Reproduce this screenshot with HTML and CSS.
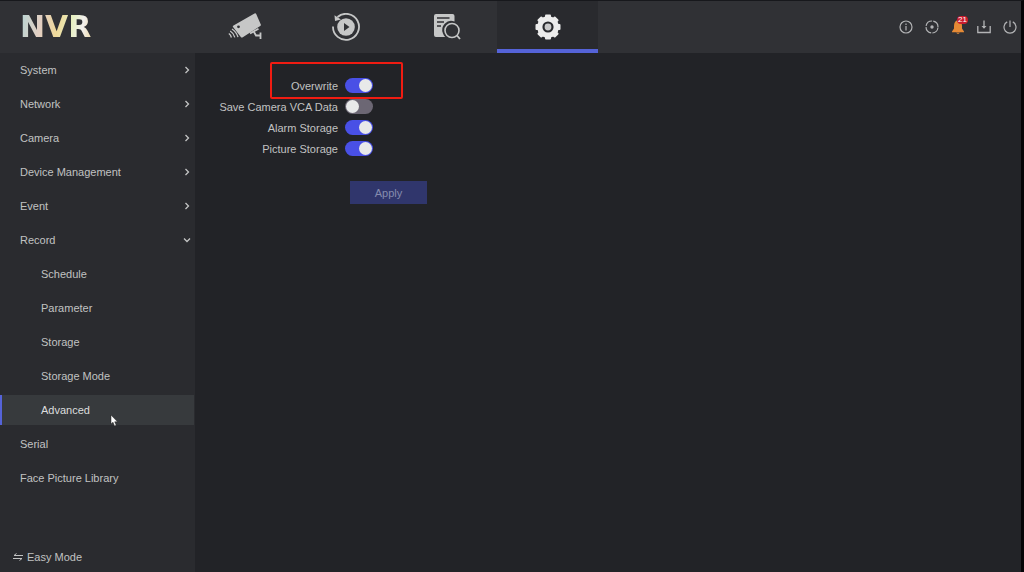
FILE: index.html
```html
<!DOCTYPE html>
<html lang="en">
<head>
    <meta charset="UTF-8">
    <title>NVR - Advanced</title>
    <link rel="stylesheet" href="styles.css">
</head>
<body>
<header class="topbar">
    <div class="logo"><span>NVR</span></div>

    <nav class="tabs" aria-label="Main">
        <a href="#live" class="tab" aria-label="Live View">
            <svg width="34" height="28" viewBox="0 0 34 28">
                <path d="M5.500 12.500 26.500.4q1.200-.6 1.700.5l4.600 10.600q.4 1-.6 1.600L14.400 24.400q-1 .5-1.600-.4L5 14q-.6-.9.5-1.500z" fill="currentColor"/>
                <circle cx="10.500" cy="13.800" r="1.400" fill="#303135"/>
                <path d="M4 16q4.600 3 6 8.200M2.200 18q3.400 2 4.600 6.400M.8 20.500q2 1.200 2.600 4" fill="none" stroke="currentColor" stroke-width="1.300"/>
                <path d="m22 20.500 8.500-4.800M26 19l2 3.500h4M32.500 19.500v6.500" fill="none" stroke="currentColor" stroke-width="1.800"/>
            </svg>
        </a>
        <a href="#playback" class="tab" aria-label="Playback">
            <svg width="28" height="28" viewBox="0 0 28 28">
                <path d="M1 13.500A13 13 0 1 0 5.500 4" fill="none" stroke="currentColor" stroke-width="1.800"/>
                <path d="M2.500 2.200 3 8l6-1.500z" fill="currentColor"/>
                <circle cx="14" cy="14" r="8.800" fill="currentColor"/>
                <path d="m12 10 5.500 4-5.500 4z" fill="#303135"/>
            </svg>
        </a>
        <a href="#search" class="tab" aria-label="File Management">
            <svg width="28" height="28" viewBox="0 0 28 28">
                <path d="M3 1h16.500q2 0 2 2v5.500a9 9 0 0 0-11.500 12q.8 2 2.200 3.500H3q-2 0-2-2V3q0-2 2-2z" fill="currentColor"/>
                <path d="M4 5h12.500M4 9h7M4 13h4" stroke="#303135" stroke-width="1.500"/>
                <circle cx="19" cy="17.500" r="7" fill="none" stroke="currentColor" stroke-width="1.600"/>
                <path d="m24 22.500 3 3.500" stroke="currentColor" stroke-width="1.800"/>
            </svg>
        </a>
        <a href="#settings" class="tab active" aria-label="Configuration" aria-current="page">
            <svg width="28" height="28" viewBox="0 0 28 28">
                <g fill="currentColor">
                    <circle cx="14" cy="14" r="10.800"/>
                    <rect x="11" y="1.500" width="6" height="25" rx="1"/>
                    <rect x="11" y="1.500" width="6" height="25" rx="1" transform="rotate(45 14 14)"/>
                    <rect x="11" y="1.500" width="6" height="25" rx="1" transform="rotate(90 14 14)"/>
                    <rect x="11" y="1.500" width="6" height="25" rx="1" transform="rotate(135 14 14)"/>
                </g>
                <circle cx="14" cy="14" r="4.500" fill="#c9c9ca" stroke="#292a2e" stroke-width="2.200"/>
            </svg>
        </a>
    </nav>

    <div class="tools">
        <button type="button" class="tool" aria-label="Information">
            <svg width="14" height="14" viewBox="0 0 14 14" fill="none" stroke="currentColor" stroke-width="1.200">
                <circle cx="7" cy="7" r="6"/>
                <path d="M7 6v4.500M7 3.500V5"/>
            </svg>
        </button>
        <button type="button" class="tool" aria-label="Status">
            <svg width="14" height="14" viewBox="0 0 14 14" fill="none" stroke="currentColor" stroke-width="1.200">
                <circle cx="7" cy="7" r="6" stroke-dasharray="8.200 1.225" stroke-dashoffset="-.6"/>
                <circle cx="7" cy="7" r="1.700" fill="currentColor" stroke="none"/>
            </svg>
        </button>
        <button type="button" class="tool alarm" aria-label="Alarms">
            <svg width="14" height="14" viewBox="0 0 14 14" fill="currentColor">
                <path d="M7 0Q3 1.200 3 6v2.500L1 11.500v.7h12v-.7l-2-3V6Q11 1.200 7 0zM5 12.700h4L7 14z"/>
            </svg>
            <span class="badge">21</span>
        </button>
        <button type="button" class="tool" aria-label="Download">
            <svg width="14" height="14" viewBox="0 0 14 14" fill="none" stroke="currentColor" stroke-width="1.300">
                <path d="M.8 6v6.500h12.400V6M7 .5V8"/>
                <path d="M4.500 6 7 8.800 9.500 6z" fill="currentColor" stroke="none"/>
            </svg>
        </button>
        <button type="button" class="tool" aria-label="Power">
            <svg width="14" height="14" viewBox="0 0 14 14" fill="none" stroke="currentColor" stroke-width="1.200">
                <path d="M4.200 1.900a6 6 0 1 0 5.600 0M7 .5V7"/>
            </svg>
        </button>
    </div>
</header>

<div class="page">
    <aside class="sidebar">
        <nav class="menu" aria-label="Configuration">
            <a href="#system">System <svg class="arrow" viewBox="0 0 8 8"><path d="m2.500 1 3 3-3 3"/></svg></a>
            <a href="#network">Network <svg class="arrow" viewBox="0 0 8 8"><path d="m2.500 1 3 3-3 3"/></svg></a>
            <a href="#camera">Camera <svg class="arrow" viewBox="0 0 8 8"><path d="m2.500 1 3 3-3 3"/></svg></a>
            <a href="#device">Device Management <svg class="arrow" viewBox="0 0 8 8"><path d="m2.500 1 3 3-3 3"/></svg></a>
            <a href="#event">Event <svg class="arrow" viewBox="0 0 8 8"><path d="m2.500 1 3 3-3 3"/></svg></a>
            <a href="#record">Record <svg class="arrow" viewBox="0 0 8 8"><path d="m1 2.500 3 3 3-3"/></svg></a>
            <a href="#schedule" class="sub">Schedule</a>
            <a href="#parameter" class="sub">Parameter</a>
            <a href="#storage" class="sub">Storage</a>
            <a href="#storage-mode" class="sub">Storage Mode</a>
            <a href="#advanced" class="sub selected" aria-current="page">Advanced
                <svg class="cursor" width="8" height="13" viewBox="0 0 8 13"><path d="M1 1v9l2-1.800L4.500 12l1.700-.7L4.700 7.800H7.500z" fill="#fff" stroke="#222" stroke-width=".5"/></svg>
            </a>
            <a href="#serial">Serial</a>
            <a href="#face">Face Picture Library</a>
        </nav>
        <button type="button" class="easy-mode">
            <svg width="10" height="8" viewBox="0 0 10 8"><path d="M10 2.500H1L3.500.5M0 5.500h9L6.500 7.500" fill="none" stroke="currentColor"/></svg>
            Easy Mode
        </button>
    </aside>

    <main class="content">
        <form>
            <div class="row highlight">
                <label for="overwrite">Overwrite</label>
                <input type="checkbox" class="switch" id="overwrite" checked>
            </div>
            <div class="row">
                <label for="vca">Save Camera VCA Data</label>
                <input type="checkbox" class="switch" id="vca">
            </div>
            <div class="row">
                <label for="alarm">Alarm Storage</label>
                <input type="checkbox" class="switch" id="alarm" checked>
            </div>
            <div class="row">
                <label for="picture">Picture Storage</label>
                <input type="checkbox" class="switch" id="picture" checked>
            </div>
            <button type="button" class="apply">Apply</button>
        </form>
    </main>
</div>
</body>
</html>
```
FILE: styles.css
```css
*, *::before, *::after {
    box-sizing: border-box;
}

body {
    margin: 0;
    min-height: 100vh;
    display: flex;
    flex-direction: column;
    font-family: "Liberation Sans", Arial, sans-serif;
    font-size: 11px;
    line-height: 14px;
    color: #c1c2c2;
    background-color: #222327;
    border-top: 1px solid #17181c;
    border-right: 3px solid #050507;
}

a {
    color: inherit;
    text-decoration: none;
}

button {
    font: inherit;
    color: inherit;
    border: none;
    background: none;
    padding: 0;
    cursor: pointer;
}

svg {
    display: block;
    flex-shrink: 0;
}

/* top bar */
.topbar {
    display: flex;
    height: 52px;
    background-color: #303135;
}

.logo {
    width: 194px;
    padding-left: 20px;
    display: flex;
    align-items: center;
    font-family: "DejaVu Sans", sans-serif;
    font-size: 30px;
    font-weight: bold;
    line-height: 36px;
}

.logo span {
    background: linear-gradient(100deg, #b5d5d5, #e3cfc2 30%, #efd99a 52%, #e6efc0 70%, #f2f0ee 85%, #eed9a6);
    -webkit-background-clip: text;
    background-clip: text;
    color: transparent;
}

.tabs {
    display: flex;
}

.tab {
    width: 101px;
    display: flex;
    align-items: center;
    justify-content: center;
    color: #c6c7c7;
    border-bottom: 4px solid transparent;
    padding-top: 4px;
}

.tab.active {
    color: #ececec;
    background-color: #292a2e;
    border-bottom-color: #5563d8;
}

.tools {
    margin-left: auto;
    padding-right: 4px;
    display: flex;
    align-items: center;
    gap: 12px;
    color: #b3b4b6;
}

.tool {
    position: relative;
}

.tool.alarm {
    color: #e58a35;
}

.badge {
    position: absolute;
    top: -4px;
    left: 6px;
    padding: 0 1px;
    border-radius: 4px;
    background-color: #c91c2e;
    color: #fff;
    font-size: 8px;
    line-height: 8px;
}

/* side menu */
.page {
    flex: 1;
    display: flex;
}

.sidebar {
    width: 195px;
    display: flex;
    flex-direction: column;
    justify-content: space-between;
    background-color: #2a2b2f;
}

.menu {
    display: flex;
    flex-direction: column;
    gap: 4px;
    padding: 2px 1px 0 0;
}

.menu a {
    position: relative;
    height: 30px;
    padding: 0 3px 0 20px;
    display: flex;
    align-items: center;
    justify-content: space-between;
}

.menu a.sub {
    padding-left: 41px;
}

.menu a.selected {
    color: #dcdddd;
    background-color: #373a3d;
    border-left: 2px solid #5563d8;
    padding-left: 39px;
}

.arrow {
    width: 8px;
    height: 8px;
    fill: none;
    stroke: #c4c5c5;
    stroke-width: 1.3;
}

.cursor {
    position: absolute;
    left: 108px;
    top: 19px;
}

.easy-mode {
    display: flex;
    align-items: center;
    gap: 4px;
    padding: 0 0 8px 13px;
}

/* settings */
.content {
    flex: 1;
    padding-top: 22px;
}

.row {
    position: relative;
    display: flex;
    align-items: center;
    gap: 7px;
    height: 21px;
}

.row label {
    width: 143px;
    text-align: right;
}

.row.highlight::after {
    content: "";
    position: absolute;
    left: 75px;
    top: -13px;
    width: 133px;
    height: 37px;
    border: 2px solid #f01c12;
    border-radius: 2px;
    pointer-events: none;
}

.switch {
    appearance: none;
    margin: 0;
    width: 28px;
    height: 15px;
    padding: 1px;
    display: flex;
    border-radius: 8px;
    background-color: #6c6774;
    cursor: pointer;
}

.switch::before {
    content: "";
    width: 13px;
    height: 13px;
    border-radius: 50%;
    background-color: #e8e9e9;
}

.switch:checked {
    justify-content: flex-end;
    background-color: #4950e6;
}

.apply {
    margin: 22px 0 0 155px;
    width: 77px;
    height: 23px;
    background-color: #30366c;
    color: #858cae;
}
```
